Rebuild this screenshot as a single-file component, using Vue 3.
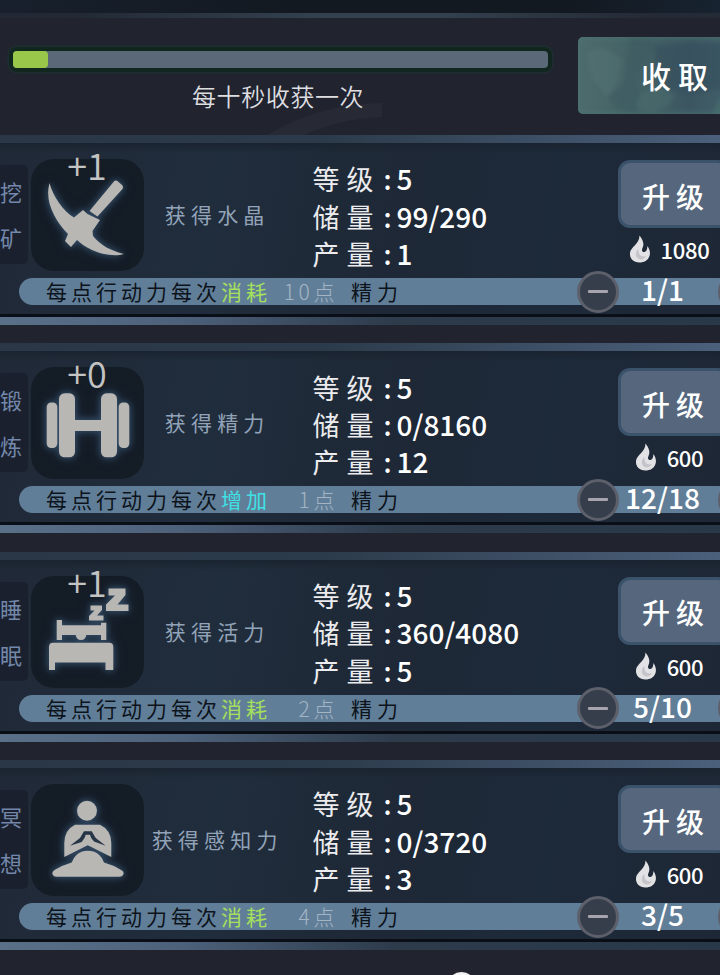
<template>
  <div class="game-panel">
    <div class="top-strip"></div>

    <!-- 收获进度 -->
    <header class="harvest">
      <svg class="harvest__arc" width="130" height="34" viewBox="0 0 130 34">
        <path d="M14 34 Q65 3 129 2 V16 Q85 18 52 34 Z" fill="#272a34" />
      </svg>
      <div class="harvest__left">
        <div class="progress">
          <div class="progress__fill" :style="{ width: progress + '%' }"></div>
        </div>
        <div class="harvest__tip">每十秒收获一次</div>
      </div>
      <button class="collect">
        <svg class="collect__bg" width="150" height="77" viewBox="0 0 150 77">
          <g class="collect__cloud">
            <path d="M8 16 L24 10 L44 22 L40 44 L30 60 L14 42 Z" fill="#5a7877" opacity=".35" />
            <path d="M52 0 L74 4 L72 18 L61 31 L57 46 L63 55 L58 77 L38 72 L30 60 L45 48 L50 24 Z" fill="#3c5a5f" opacity=".5" />
            <path d="M62 56 L80 49 L96 57 L92 69 L72 77 L58 70 Z" fill="#4a6d6f" opacity=".55" />
            <path d="M134 77 L142 62 L150 58 V77 Z" fill="#4a7270" opacity=".6" />
            <path d="M76 9 L150 6 V50 L112 58 L82 47 Z" fill="#364f5d" opacity=".6" />
          </g>
        </svg>
        <span>收取</span>
      </button>
    </header>

    <!-- 行动列表 -->
    <main class="jobs">
      <section v-for="job in jobs" :key="job.name" class="job">
        <div class="job__main">
          <div class="job__name">
            <span v-for="ch in job.name" :key="ch">{{ ch }}</span>
          </div>
          <div class="job__icon">
            <svg v-if="job.icon === 'pick'" class="glyph" viewBox="0 0 112 112">
              <path d="M18.5 24 C22 37 32 52 43 58.5 L52 51 L56.5 55 L69 61 L61.5 72 L62 77 C70 87 81 92 93 95 C83 98 70 95 61 91 C55 88 50 85 46 81 L40 88 L34 82 L37 75 C25 63 13 43 18.5 24 Z" />
              <path d="M82.5 23 Q84.5 20.5 87 22.5 L91 26 Q93 28 91 30.5 L66.5 57.5 L58.5 52 Z" />
            </svg>
            <svg v-else-if="job.icon === 'dumbbell'" class="glyph" viewBox="0 0 112 112">
              <rect x="15.7" y="35.5" width="10.6" height="45.5" rx="4.5" />
              <rect x="28" y="26.3" width="16" height="64" rx="5.5" />
              <rect x="43" y="53" width="28" height="11" />
              <rect x="70" y="26.3" width="16" height="64" rx="5.5" />
              <rect x="87.7" y="35.5" width="10.6" height="45.5" rx="4.5" />
            </svg>
            <svg v-else-if="job.icon === 'bed'" class="glyph" viewBox="0 0 112 112">
              <path d="M25.7 44 H31 V49.3 H70 V46.7 H75.3 V64 H70 V59 H55.3 Q54.5 64 50 64 Q45.5 64 44.7 59 H31 V64 H25.7 Z" />
              <path d="M22 66.7 H78.5 Q82.3 66.7 82.3 71 V94 H74.5 V86.5 H24 V94 H18 V71 Q18 66.7 22 66.7 Z" />
              <path d="M77.5 12.5 H94.5 V19 L86.5 28.5 H97.5 V35 H75 V28.5 L84 19.5 H77.5 Z" />
              <path d="M59.5 29.5 H71 V34 L66 39.5 H72.5 V44.5 H58 V40 L63.5 34.5 H59.5 Z" />
            </svg>
            <svg v-else class="glyph" viewBox="0 0 112 112">
              <circle cx="56" cy="26.7" r="10" />
              <path d="M44 40.7 H69 Q80.3 46 80.3 59 V73 L56.7 61.3 L33.3 73 V59 Q33.3 46 44 40.7 Z" />
              <path class="glyph__cut" d="M39 61.7 L49 54 L53 47.3 H60.7 L64.7 54 L74.7 61.7 L63 57.5 L60.2 54 L59 50.7 H54.7 L53.5 54 L50.7 58 Z" />
              <path d="M25 92.7 Q21.3 92 21.3 89 Q21.5 87 24 85.7 Q32 81 40.7 78.5 Q43 73 45.7 70.7 Q50 66.7 56.7 66.7 Q64 66.7 68 70.7 Q71 73 73 78.5 Q82 81 89.7 85.7 Q92.7 87 92.7 89 Q92.5 92 89 92.7 Z" />
            </svg>
            <span v-if="job.bonus" class="job__bonus">{{ job.bonus }}</span>
          </div>
          <div class="job__gain">{{ job.gain }}</div>
          <div class="job__stats">
            <div v-for="stat in job.stats" :key="stat.label" class="stat">
              <span class="stat__label">{{ stat.label }}</span>
              <span class="stat__colon">:</span>
              <span class="stat__value">{{ stat.value }}</span>
            </div>
          </div>
          <div class="job__upgrade">
            <button class="upgrade">升级</button>
            <div class="cost">
              <svg width="22" height="28" viewBox="0 0 22 28">
                <path d="M10.5 0.5 C14 5 15.5 9 13.5 13 C12 16 14 18 16.5 16.5 C18.5 15 18 13 18.5 11 C21 15 21.5 18 20.5 21 C19 25.5 15 27.5 10.5 27.5 C4 27.5 0.5 23 1 18 C1.5 12 10.5 9 10.5 0.5 Z" fill="#e2e2e4" />
                <path d="M9 14 C6 18 6 22 10 24 C13 25 15 24 17 21 C14 22 11 21 10 18.5 Z" fill="#c4c4c9" />
              </svg>
              <span>{{ job.cost }}</span>
            </div>
          </div>
        </div>
        <div class="job__bar">
          <span class="bar-text">每点行动力每次</span>
          <span :class="['bar-mode', job.mode === '增加' ? 'plus' : 'minus']">{{ job.mode }}</span>
          <span class="bar-amount">{{ job.amount }}点</span>
          <span class="bar-target">精力</span>
          <button class="round"></button>
          <span class="bar-count">{{ job.count }}</span>
          <button class="round"></button>
        </div>
      </section>
    </main>

    <footer class="bottom"><div class="bottom__dot"></div></footer>
  </div>
</template>

<script setup>
import { ref } from 'vue';

const progress = ref(6.6);

const makeStats = (level, stock, output) => [
  { label: '等级', value: level },
  { label: '储量', value: stock },
  { label: '产量', value: output },
];

const jobs = ref([
  { name: '挖矿', icon: 'pick', bonus: '+1', gain: '获得水晶', stats: makeStats('5', '99/290', '1'), cost: 1080, mode: '消耗', amount: 10, count: '1/1' },
  { name: '锻炼', icon: 'dumbbell', bonus: '+0', gain: '获得精力', stats: makeStats('5', '0/8160', '12'), cost: 600, mode: '增加', amount: 1, count: '12/18' },
  { name: '睡眠', icon: 'bed', bonus: '+1', gain: '获得活力', stats: makeStats('5', '360/4080', '5'), cost: 600, mode: '消耗', amount: 2, count: '5/10' },
  { name: '冥想', icon: 'meditate', bonus: '', gain: '获得感知力', stats: makeStats('5', '0/3720', '3'), cost: 600, mode: '消耗', amount: 4, count: '3/5' },
]);
</script>

<style>
body {
  margin: 0;
  background: #21242e;
}
</style>

<style scoped>
.game-panel {
  width: 720px;
  height: 975px;
  overflow: hidden;
  display: flex;
  flex-direction: column;
  background: #21242e;
  color: #fff;
  font-family: "Noto Sans CJK SC", "Noto Sans", sans-serif;
}
button {
  font-family: inherit;
  color: inherit;
  border: none;
  padding: 0;
}
.top-strip {
  height: 13px;
  flex: none;
  background: linear-gradient(90deg, #17202c, #131921 40%, #131921 80%, #172330);
}
.harvest {
  position: relative;
  height: 122px;
  flex: none;
  box-sizing: border-box;
  padding: 19px 0 0 9px;
  border-top: 5px solid;
  border-image: linear-gradient(90deg, #222935 10%, #33414e 45%, #33414e 60%, #242a36 90%) 1;
  display: flex;
  align-items: flex-start;
  gap: 26px;
}
.harvest__arc {
  position: absolute;
  left: 253px;
  top: 83px;
}
.harvest__left {
  position: relative;
  flex: none;
  width: 543px;
  padding-top: 10px;
}
.progress {
  box-sizing: border-box;
  height: 25px;
  border: 4px solid #10261f;
  border-radius: 8px;
  background: #5a6878;
  box-shadow: 0 0 3px #1c4238;
}
.progress__fill {
  height: 100%;
  border-radius: 4px;
  background: #99c74a;
}
.harvest__tip {
  margin-top: 6px;
  padding-left: 183px;
  font-size: 24px;
  line-height: 36px;
  font-weight: 350;
  letter-spacing: 0.6px;
  color: #dedee1;
}
.collect {
  position: relative;
  flex: none;
  width: 150px;
  height: 77px;
  border-radius: 5px;
  overflow: hidden;
  background: linear-gradient(90deg, #4e6b6d, #456366 35%, #3c5661 75%, #42606a);
  box-shadow: inset 0 0 6px #4b7572;
  text-align: left;
}
.collect__bg {
  position: absolute;
  left: 0;
  top: 0;
}
.collect__cloud {
  filter: blur(2px);
}
.collect span {
  position: relative;
  top: -1px;
  padding-left: 63px;
  font-size: 30px;
  font-weight: 500;
  letter-spacing: 7px;
}
.jobs {
  flex: none;
  display: flex;
  flex-direction: column;
  gap: 18.4px;
}
.job {
  height: 190px;
  box-sizing: border-box;
  padding-top: 8px;
  display: flex;
  flex-direction: column;
  background:
    linear-gradient(90deg, #293746, #2c3b4b 45%, #4b607b) top / 100% 8px no-repeat,
    linear-gradient(90deg, #5a7089, #4d617b 25%, #2d3b4b 55%, #29394a) bottom / 100% 8px no-repeat,
    linear-gradient(#0a0f17, #0a0f17) 0 179px / 100% 3px no-repeat,
    linear-gradient(180deg, #1a2330 8px, transparent 18px),
    linear-gradient(100deg, #202937, #202d3c 30%, #1e2836 55%, #1d2a3a 75%, #1e2735);
}
.job__main {
  height: 135px;
  display: flex;
  align-items: flex-start;
}
.job__name {
  width: 28px;
  height: 99px;
  margin: 22px 3px 0 0;
  box-sizing: border-box;
  padding-top: 3px;
  border-radius: 0 5px 5px 0;
  background: #1a202d;
  display: flex;
  flex-direction: column;
  font-size: 22px;
  line-height: 46px;
  color: #7388aa;
}
.job__icon {
  position: relative;
  width: 113px;
  height: 112px;
  margin-top: 16px;
  border-radius: 23px;
  background: #141c26;
}
.glyph {
  display: block;
  width: 112px;
  height: 112px;
  fill: #b9b7b3;
  filter: drop-shadow(0 0 3px #364f69) drop-shadow(0 0 5px #26394e);
}
.glyph__cut {
  fill: #263646;
}
.job__bonus {
  position: absolute;
  left: 0;
  top: -16px;
  width: 112px;
  text-align: center;
  font-size: 36px;
  line-height: 42px;
  font-weight: 350;
  color: #c3c3c3;
}
.job__gain {
  width: 143px;
  margin: 55px 0 0 0;
  text-align: center;
  text-indent: 4px;
  font-size: 21px;
  line-height: 32px;
  letter-spacing: 5.2px;
  white-space: nowrap;
  color: #92a3b8;
}
.job__stats {
  width: 305px;
  margin: 17px 0 0 26px;
}
.stat {
  display: flex;
  height: 37.4px;
  align-items: center;
  font-size: 27px;
  line-height: 37px;
}
.stat__label {
  width: 66px;
  letter-spacing: 7px;
  white-space: nowrap;
  color: #ececee;
}
.stat__colon {
  width: 18px;
  text-align: center;
  font-weight: 500;
}
.stat__value {
  font-size: 28px;
  font-weight: 500;
}
.job__upgrade {
  flex: none;
  width: 103px;
  margin-top: 17px;
}
.upgrade {
  display: block;
  width: 112px;
  height: 68px;
  margin-left: 1px;
  border: 3px solid #3b526b;
  border-radius: 12px;
  background: #56677d;
  padding: 3px 0 0 21px;
  text-align: left;
  font-size: 28px;
  font-weight: 500;
  letter-spacing: 6px;
}
.cost {
  display: flex;
  align-items: center;
  justify-content: center;
  gap: 10px;
  margin: 6px 0 0 1px;
  height: 30px;
  font-size: 22px;
  font-weight: 500;
  letter-spacing: -0.3px;
}
.job__bar {
  height: 27px;
  margin-left: 19px;
  padding-left: 27px;
  border-radius: 14px 0 0 14px;
  background: #617e98;
  display: flex;
  align-items: center;
  font-size: 21px;
  line-height: 27px;
  white-space: nowrap;
}
.bar-text {
  width: 175px;
  flex: none;
  letter-spacing: 4px;
  color: #0d131b;
}
.bar-mode {
  width: 50px;
  flex: none;
  letter-spacing: 4px;
}
.bar-mode.minus { color: #a5e05c; }
.bar-mode.plus { color: #3fe0e6; }
.bar-amount {
  width: 67px;
  flex: none;
  text-align: right;
  font-weight: 300;
  letter-spacing: 3.6px;
  color: #a3b5c5;
}
.bar-target {
  width: 226px;
  flex: none;
  margin-left: 13px;
  letter-spacing: 5px;
  color: #0d131b;
}
.round {
  flex: none;
  width: 42px;
  height: 42px;
  border: 3px solid #5d5f6b;
  border-radius: 50%;
  background: #363e4b;
  display: flex;
  align-items: center;
  justify-content: center;
}
.round::before {
  content: "";
  width: 20px;
  height: 3px;
  border-radius: 1px;
  background: #a6a5ad;
}
.bar-count {
  width: 87px;
  flex: none;
  padding-right: 12px;
  padding-bottom: 4px;
  text-align: center;
  font-size: 28px;
  font-weight: 500;
}
.bottom {
  flex: 1;
  min-height: 0;
  overflow: hidden;
  padding: 22px 0 0 447px;
}
.bottom__dot {
  width: 29px;
  height: 29px;
  border-radius: 50%;
  background: #f4f4f4;
}
</style>
